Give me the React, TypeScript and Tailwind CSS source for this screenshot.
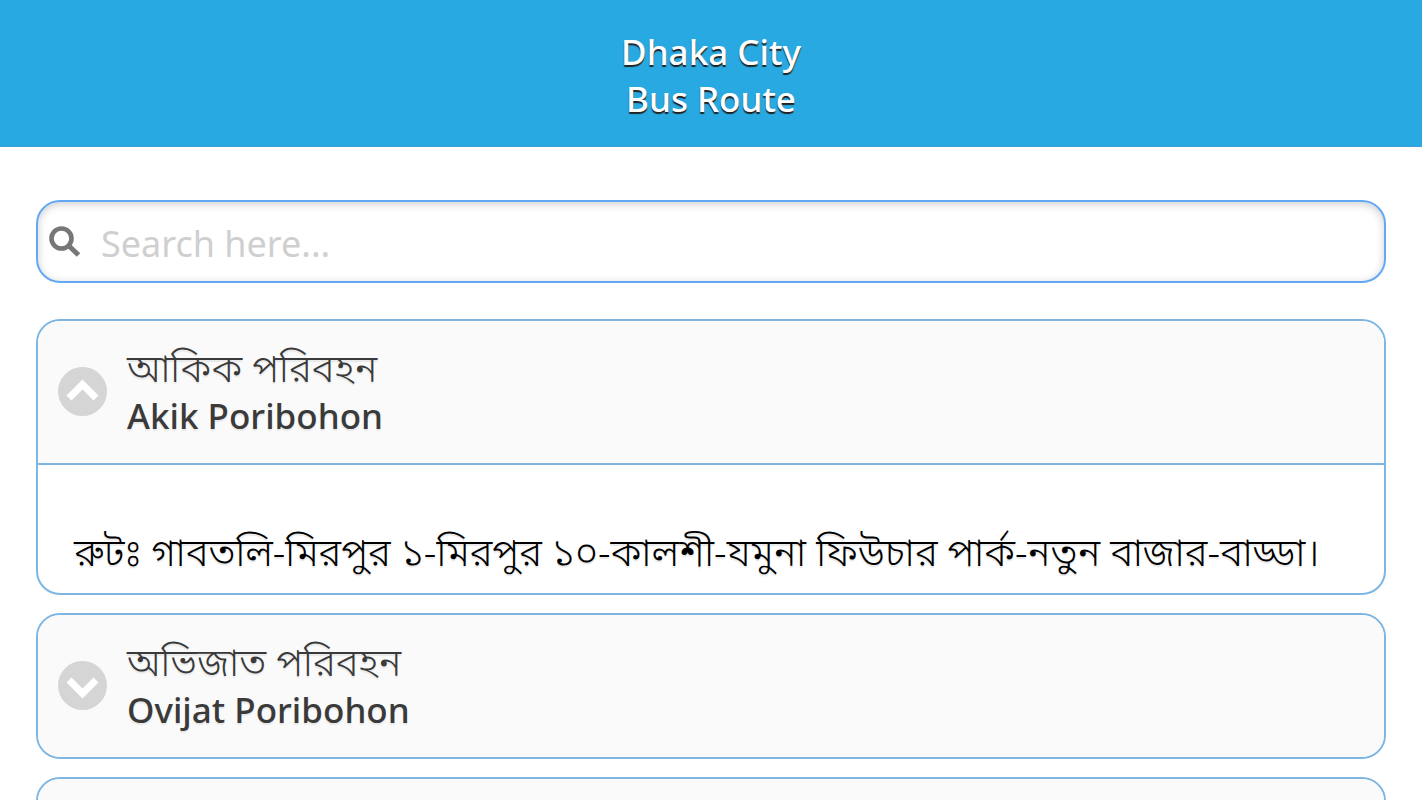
import { useState } from "react";

type Route = {
  id: string;
  bangla?: string;
  english?: string;
  stops?: string;
};

const routes: Route[] = [
  {
    id: "akik",
    bangla: "আকিক পরিবহন",
    english: "Akik Poribohon",
    stops:
      "রুটঃ গাবতলি-মিরপুর ১-মিরপুর ১০-কালশী-যমুনা ফিউচার পার্ক-নতুন বাজার-বাড্ডা।",
  },
  { id: "ovijat", bangla: "অভিজাত পরিবহন", english: "Ovijat Poribohon" },
  { id: "next" },
];

function SearchIcon() {
  return (
    <svg viewBox="0 0 32 32" className="size-8 shrink-0" fill="none" stroke="#777777" aria-hidden="true">
      <circle cx="12.5" cy="12.5" r="10" strokeWidth="4.6" />
      <path d="M19.5 19.5 29.5 29" strokeWidth="5" />
    </svg>
  );
}

function Toggle({ open }: { open: boolean }) {
  return (
    <svg viewBox="0 0 49 49" className="size-[49px] shrink-0" aria-hidden="true">
      <circle cx="24.5" cy="24.5" r="24.5" fill="#d5d5d5" />
      <path
        d={open ? "M11 31 24.5 17.5 38 31" : "M11 19 24.5 32.5 38 19"}
        fill="none"
        stroke="#fff"
        strokeWidth="7"
      />
    </svg>
  );
}

function RouteItem({ route, open, onToggle }: { route: Route; open: boolean; onToggle: () => void }) {
  return (
    <li className="overflow-hidden rounded-3xl border-2 border-[#7db6e2]">
      <button
        type="button"
        aria-expanded={open}
        onClick={onToggle}
        className="flex h-[142px] w-full items-center gap-5 bg-[#fafafa] px-5 pb-[2px] text-left text-[#3a3a3a] [text-shadow:0_2px_1px_#e8e8e8]"
      >
        <Toggle open={open} />
        <span className="flex flex-col">
          <span className="text-[39px] leading-[50px] font-light">{route.bangla}</span>
          <span className="text-[35px] leading-[48px] font-medium">{route.english}</span>
        </span>
      </button>
      {open && route.stops && (
        <p className="border-t-2 border-[#7db6e2] px-9 pt-14 pb-3 text-[39px] leading-[60px] font-light text-black [text-shadow:0_2px_1px_#e8e8e8]">
          {route.stops}
        </p>
      )}
    </li>
  );
}

export default function App() {
  const [openId, setOpenId] = useState("akik");
  const [query, setQuery] = useState("");

  const visible = routes.filter((r) =>
    `${r.bangla ?? ""} ${r.english ?? ""}`.toLowerCase().includes(query.toLowerCase()),
  );

  return (
    <div className="h-screen overflow-y-auto bg-white font-['Noto_Sans','Noto_Sans_Bengali',sans-serif] [scrollbar-width:none]">
      <header className="border-b border-[#3b9fd8] bg-[#29a9e2] pt-7 pb-6">
        <h1 className="text-center text-[35px] leading-[47px] font-medium text-white [text-shadow:0_2px_1px_#222]">
          Dhaka City
          <br />
          Bus Route
        </h1>
      </header>

      <main className="px-9 pt-[53px]">
        <label className="flex h-[83px] items-center gap-5 rounded-3xl border-2 border-[#63a8f5] px-[11px] shadow-[inset_0_2px_8px_rgba(0,0,0,0.2)]">
          <SearchIcon />
          <input
            type="text"
            aria-label="Search here..."
            placeholder="Search here..."
            value={query}
            onChange={(e) => setQuery(e.target.value)}
            className="min-w-0 flex-1 bg-transparent pt-1 text-[36px] text-[#333] outline-none placeholder:text-[#cfcfcf]"
          />
        </label>

        <ul className="mt-9 flex flex-col gap-[18px]">
          {visible.map((route) => (
            <RouteItem
              key={route.id}
              route={route}
              open={route.id === openId}
              onToggle={() => setOpenId(route.id === openId ? "" : route.id)}
            />
          ))}
        </ul>
      </main>
    </div>
  );
}
